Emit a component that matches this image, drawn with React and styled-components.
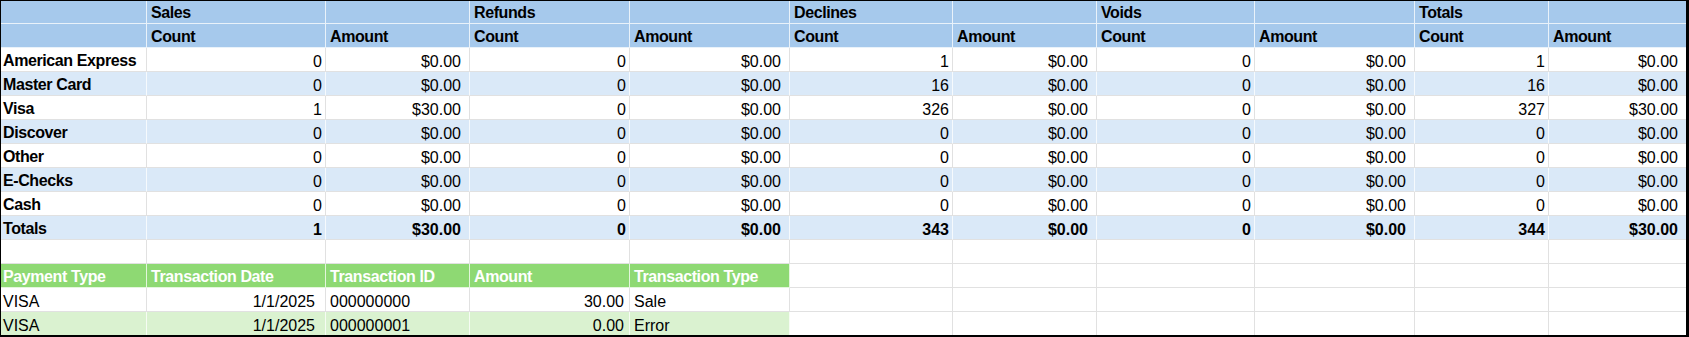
import React from "react";
import styled, { createGlobalStyle } from "styled-components";

const COLS = [146, 179, 144, 160, 160, 163, 144, 158, 160, 134, 137];

const BLUE = "#a6c9ec";
const BLUE_LIGHT = "#dae9f8";
const GREEN = "#8ed973";
const GREEN_LIGHT = "#daf2d0";

const GlobalStyle = createGlobalStyle`
  body {
    margin: 0;
    background: #fff;
    font-family: "Liberation Sans", Arial, sans-serif;
  }
`;

const summary = [
  ["American Express", [0, "$0.00", 0, "$0.00", 1, "$0.00", 0, "$0.00", 1, "$0.00"]],
  ["Master Card", [0, "$0.00", 0, "$0.00", 16, "$0.00", 0, "$0.00", 16, "$0.00"]],
  ["Visa", [1, "$30.00", 0, "$0.00", 326, "$0.00", 0, "$0.00", 327, "$30.00"]],
  ["Discover", [0, "$0.00", 0, "$0.00", 0, "$0.00", 0, "$0.00", 0, "$0.00"]],
  ["Other", [0, "$0.00", 0, "$0.00", 0, "$0.00", 0, "$0.00", 0, "$0.00"]],
  ["E-Checks", [0, "$0.00", 0, "$0.00", 0, "$0.00", 0, "$0.00", 0, "$0.00"]],
  ["Cash", [0, "$0.00", 0, "$0.00", 0, "$0.00", 0, "$0.00", 0, "$0.00"]],
];

const totals = [1, "$30.00", 0, "$0.00", 343, "$0.00", 0, "$0.00", 344, "$30.00"];

const groups = ["Sales", "Refunds", "Declines", "Voids", "Totals"];

const txHead = ["Payment Type", "Transaction Date", "Transaction ID", "Amount", "Transaction Type"];
const transactions = [
  ["VISA", "1/1/2025", "000000000", "30.00", "Sale"],
  ["VISA", "1/1/2025", "000000001", "0.00", "Error"],
];

const Blank = ({ n, bg }) =>
  Array.from({ length: n }, (_, i) => <Cell key={"b" + i} $bg={bg} />);

const App = () => {
  return (
    <>
      <GlobalStyle />
      <Sheet>
        {/* group header */}
        <Row $h={23}>
          <Cell $bg={BLUE} $head />
          {groups.map((g) => (
            <React.Fragment key={g}>
              <Cell $bg={BLUE} $head>{g}</Cell>
              <Cell $bg={BLUE} $head />
            </React.Fragment>
          ))}
        </Row>

        <Row>
          <Cell $bg={BLUE} $head />
          {groups.map((g) => (
            <React.Fragment key={g}>
              <Cell $bg={BLUE} $head>Count</Cell>
              <Cell $bg={BLUE} $head>Amount</Cell>
            </React.Fragment>
          ))}
        </Row>

        {summary.map(([name, vals], i) => {
          const bg = i % 2 === 1 ? BLUE_LIGHT : "#fff";
          return (
            <Row key={name}>
              <Cell $bg={bg} $head $first>{name}</Cell>
              {vals.map((v, j) => (
                <Cell key={j} $bg={bg} $right $money={j % 2 === 1}>
                  {v}
                </Cell>
              ))}
            </Row>
          );
        })}

        <Row>
          <Cell $bg={BLUE_LIGHT} $head $first>Totals</Cell>
          {totals.map((v, j) => (
            <Cell key={j} $bg={BLUE_LIGHT} $right $bold $money={j % 2 === 1}>
              {v}
            </Cell>
          ))}
        </Row>

        {/* spacer row */}
        <Row>
          <Blank n={11} />
        </Row>

        <Row>
          {txHead.map((h, i) => (
            <Cell key={h} $bg={GREEN} $head $white $first={i === 0}>
              {h}
            </Cell>
          ))}
          <Blank n={6} />
        </Row>

        {transactions.map((t, i) => {
          const bg = i % 2 === 1 ? GREEN_LIGHT : "#fff";
          const last = i === transactions.length - 1;
          return (
            <Row key={t[2]} $h={last ? 23 : 24} $last={last}>
              <Cell $bg={bg} $first>{t[0]}</Cell>
              <Cell $bg={bg} $right $pr={10}>{t[1]}</Cell>
              <Cell $bg={bg}>{t[2]}</Cell>
              <Cell $bg={bg} $right $pr={5}>{t[3]}</Cell>
              <Cell $bg={bg}>{t[4]}</Cell>
              <Blank n={6} />
            </Row>
          );
        })}
      </Sheet>
    </>
  );
};

export default App;

const Sheet = styled.div`
  width: 1689px;
  height: 337px;
  box-sizing: border-box;
  border-style: solid;
  border-color: #000;
  border-width: 1px 3px 2px 1px;
  display: flex;
  flex-direction: column;
  overflow: hidden;
  color: #000;
`;

const Row = styled.div`
  display: grid;
  grid-template-columns: ${COLS.map((c) => c + "px").join(" ")};
  height: ${(p) => p.$h || 24}px;
  flex-shrink: 0;

  & > div {
    border-bottom: ${(p) => (p.$last ? "none" : undefined)};
  }

  & > div:last-child {
    border-right: none;
  }
`;

const Cell = styled.div`
  box-sizing: border-box;
  display: flex;
  align-items: flex-end;
  justify-content: ${(p) => (p.$right ? "flex-end" : "flex-start")};
  background: ${(p) => p.$bg || "#fff"};
  border-right: 1px solid
    ${(p) => (p.$bg && p.$bg !== "#fff" ? "rgba(255, 255, 255, 0.75)" : "#e1e1e1")};
  border-bottom: 1px solid
    ${(p) => (p.$bg === BLUE || p.$bg === GREEN ? "rgba(255, 255, 255, 0.75)" : "#e1e1e1")};
  padding-left: ${(p) => (p.$first ? 2 : 4)}px;
  padding-right: ${(p) => (p.$pr != null ? p.$pr : p.$money ? 8 : 3)}px;
  padding-bottom: ${(p) => (p.$head ? 1 : 0)}px;
  font-size: 16px;
  letter-spacing: ${(p) => (p.$head ? "-0.4px" : "0")};
  font-weight: ${(p) => (p.$head || p.$bold ? 700 : 400)};
  color: ${(p) => (p.$white ? "#fff" : "#000")};
  line-height: 18px;
  white-space: nowrap;
  overflow: hidden;
`;
